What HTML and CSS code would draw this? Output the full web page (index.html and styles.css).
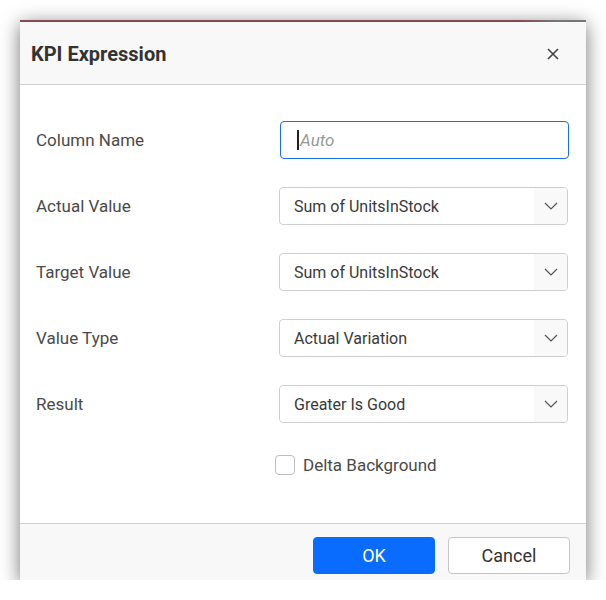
FILE: index.html
```html
<!DOCTYPE html>
<html>
<head>
<meta charset="utf-8">
<link rel="stylesheet" href="styles.css">
</head>
<body>
<div class="dialog">
  <div class="topline"></div>
  <div class="header">
    <span class="title">KPI Expression</span>
    <span class="close">
      <svg width="12" height="12" viewBox="0 0 12 12"><path d="M1 1L11 11M11 1L1 11" stroke="#444" stroke-width="1.6" fill="none"/></svg>
    </span>
  </div>
  <div class="body">
    <div class="label">Column Name</div>
    <div class="input"><span class="caret"></span><span class="placeholder">Auto</span></div>

    <div class="label">Actual Value</div>
    <div class="select"><span class="value">Sum of UnitsInStock</span><span class="arrow"><svg width="14" height="8" viewBox="0 0 14 8"><path d="M1 1L7 7L13 1" stroke="#555" stroke-width="1.2" fill="none"/></svg></span></div>

    <div class="label">Target Value</div>
    <div class="select"><span class="value">Sum of UnitsInStock</span><span class="arrow"><svg width="14" height="8" viewBox="0 0 14 8"><path d="M1 1L7 7L13 1" stroke="#555" stroke-width="1.2" fill="none"/></svg></span></div>

    <div class="label">Value Type</div>
    <div class="select"><span class="value">Actual Variation</span><span class="arrow"><svg width="14" height="8" viewBox="0 0 14 8"><path d="M1 1L7 7L13 1" stroke="#555" stroke-width="1.2" fill="none"/></svg></span></div>

    <div class="label">Result</div>
    <div class="select"><span class="value">Greater Is Good</span><span class="arrow"><svg width="14" height="8" viewBox="0 0 14 8"><path d="M1 1L7 7L13 1" stroke="#555" stroke-width="1.2" fill="none"/></svg></span></div>

    <div class="spacer"></div>
    <label class="check"><span class="box"></span><span>Delta Background</span></label>
  </div>
  <div class="footer">
    <button class="btn primary">OK</button>
    <button class="btn">Cancel</button>
  </div>
</div>
</body>
</html>
```
FILE: styles.css
```css
html, body {
  margin: 0;
  padding: 0;
  background: #ffffff;
  font-family: Roboto, "Liberation Sans", sans-serif;
}
.dialog {
  position: relative;
  margin: 20px 0 0 20px;
  width: 566px;
  height: 560px;
  background: #ffffff;
  box-shadow: 0 4px 18px rgba(0,0,0,0.55);
  display: flex;
  flex-direction: column;
}
.topline {
  height: 2px;
  background: linear-gradient(to right, #8a4750 0%, #8a4750 88%, #777 95%, #777 100%);
}
.header {
  height: 62px;
  background: #f8f8f8;
  border-bottom: 1px solid #d0d0d0;
  display: flex;
  align-items: center;
  justify-content: space-between;
  padding: 0 27px 0 11px;
}
.title {
  font-size: 20px;
  font-weight: 700;
  color: #333;
  margin-top: 2px;
}
.close {
  display: flex;
  align-items: center;
  margin-top: 1px;
}
.body {
  flex: 1;
  display: grid;
  grid-template-columns: 243px 1fr;
  grid-auto-rows: 38px;
  row-gap: 28px;
  padding: 36px 18px 0 16px;
  align-items: center;
}
.label {
  font-size: 17px;
  color: #4a4a4a;
}
.input {
  height: 38px;
  box-sizing: border-box;
  border: 1px solid #1a6cf0;
  border-radius: 4px;
  display: flex;
  align-items: center;
  padding-left: 16px;
  margin-left: 1px;
  margin-right: -1px;
}
.caret {
  width: 2px;
  height: 20px;
  background: #222;
}
.placeholder {
  font-style: italic;
  color: #999;
  font-size: 17px;
  margin-left: 1px;
}
.select {
  height: 38px;
  box-sizing: border-box;
  border: 1px solid #cfcfcf;
  border-radius: 4px;
  display: flex;
  align-items: center;
  overflow: hidden;
}
.value {
  flex: 1;
  padding-left: 14px;
  font-size: 16px;
  color: #3a3a3a;
}
.arrow {
  width: 33px;
  align-self: stretch;
  background: #f9f9f9;
  display: flex;
  align-items: center;
  justify-content: center;
}
.check {
  display: flex;
  align-items: center;
  gap: 8px;
  font-size: 17px;
  color: #4a4a4a;
  margin-left: -4px;
  margin-top: -10px;
}
.box {
  width: 20px;
  height: 20px;
  box-sizing: border-box;
  border: 1px solid #bdbdbd;
  border-radius: 4px;
  background: #fff;
}
.footer {
  height: 57px;
  box-sizing: border-box;
  background: #f8f8f8;
  border-top: 1px solid #d0d0d0;
  display: flex;
  justify-content: flex-end;
  align-items: flex-start;
  padding: 13px 16px 0 0;
  gap: 13px;
}
.btn {
  width: 122px;
  height: 37px;
  border-radius: 4px;
  border: 1px solid #c6c6c6;
  background: #fff;
  color: #333;
  font-family: Roboto, "Liberation Sans", sans-serif;
  font-size: 18px;
}
.primary {
  background: #0a6cff;
  border-color: #0a6cff;
  color: #fff;
}
```
